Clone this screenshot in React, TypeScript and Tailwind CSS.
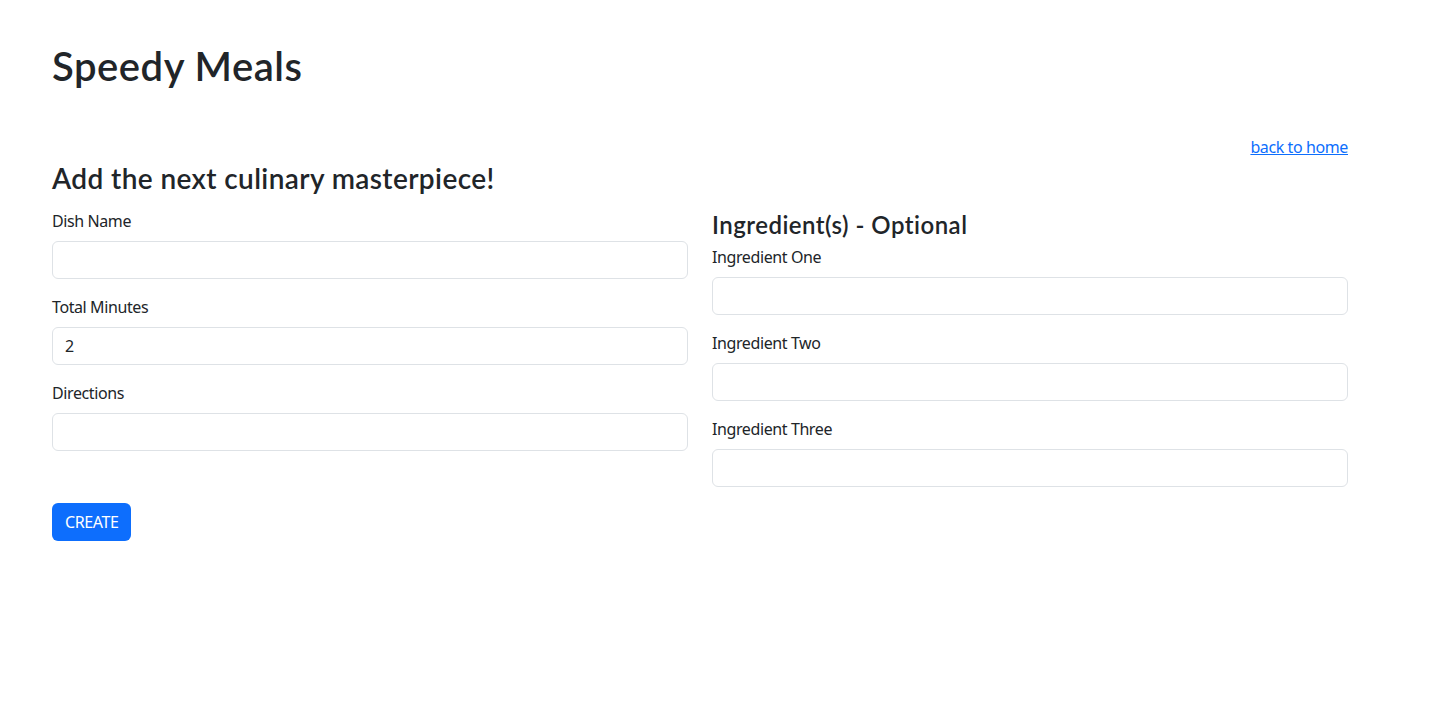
import React from 'react';

const Field = ({ label, value }: { label: string; value?: string }) => {
  return (
    <div className="mb-4">
      <label className="block mb-2 text-base leading-6">{label}</label>
      <input
        type="text"
        defaultValue={value}
        className="block w-full h-[38px] px-3 py-1.5 text-base leading-6 text-[#212529] bg-white border border-[#dee2e6] rounded-[6px] outline-none"
      />
    </div>
  );
};

const headingFont = { fontFamily: 'Lato, "Noto Sans", sans-serif' };

const App = () => {
  return (
    <div
      className="min-h-screen bg-white text-[#212529] tracking-[-0.025em]"
      style={{ fontFamily: '"Noto Sans", "Open Sans", sans-serif' }}
    >
      <div className="w-[1296px] ml-[52px] pt-[42px]">
        <h1 className="text-[40px] leading-[48px] font-semibold tracking-[0.013em] mb-2" style={headingFont}>
          Speedy Meals
        </h1>

        <div className="flex justify-end mt-[45px]">
          <a href="#" className="text-base leading-6 text-[#0d6efd] underline">
            back to home
          </a>
        </div>

        <h3
          className="text-[28px] leading-[34px] font-semibold tracking-[0.014em] mt-[2px] mb-[14px]"
          style={headingFont}
        >
          Add the next culinary masterpiece!
        </h3>

        <form className="flex gap-6 items-start">
          <div className="flex-1">
            <Field label="Dish Name" />
            <Field label="Total Minutes" value="2" />
            <Field label="Directions" />
            <button
              type="button"
              className="mt-[36px] h-[38px] px-[13px] text-base leading-6 text-white bg-[#0d6efd] rounded-[6px]"
            >
              CREATE
            </button>
          </div>
          <div className="flex-1">
            <h4
              className="text-2xl leading-[29px] font-semibold tracking-[0.02em] mt-[1px] mb-[6px]"
              style={headingFont}
            >
              Ingredient(s) - Optional
            </h4>
            <Field label="Ingredient One" />
            <Field label="Ingredient Two" />
            <Field label="Ingredient Three" />
          </div>
        </form>
      </div>
    </div>
  );
};

export default App;
